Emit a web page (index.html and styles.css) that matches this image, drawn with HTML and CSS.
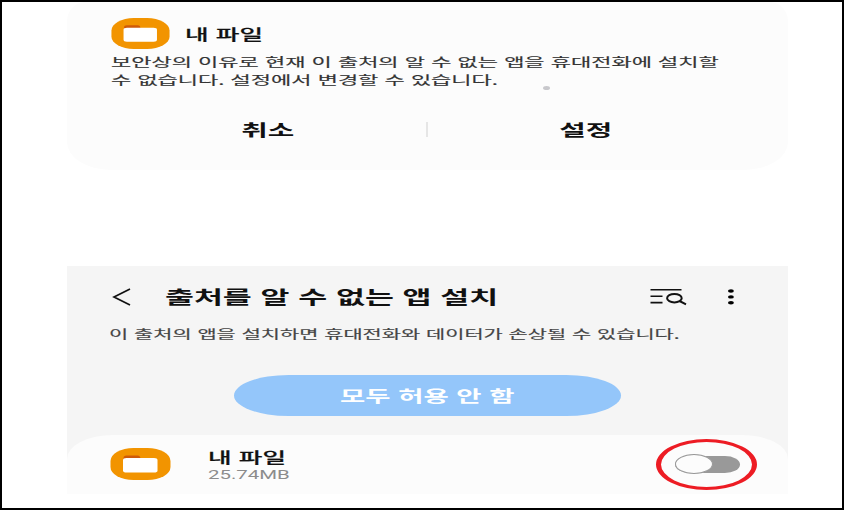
FILE: index.html
```html
<!DOCTYPE html>
<html lang="ko">
<head>
    <meta charset="UTF-8">
    <meta name="viewport" content="width=device-width, initial-scale=1.0">
    <title>출처를 알 수 없는 앱 설치</title>
    <link rel="stylesheet" href="styles.css">
</head>
<body>
    <div class="dialog">
        <div class="dialog-head">
            <svg class="app-icon" width="59" height="31" viewBox="0 0 60 32">
                <rect width="60" height="32" rx="23" ry="13" fill="#f29400"/>
                <path d="M13 13V10Q13 7.5 16 7.5H27Q30 7.5 30 11V14H13Z" fill="#cf5a08"/>
                <rect x="12.5" y="10" width="34.5" height="14.5" rx="3.5" ry="2" fill="#fff"/>
            </svg>
            <h2 class="app-name">내 파일</h2>
        </div>
        <p class="message">보안상의 이유로 현재 이 출처의 알 수 없는 앱을 휴대전화에 설치할<br>수 없습니다. 설정에서 변경할 수 있습니다.</p>
        <span class="touch-dot"></span>
        <div class="actions">
            <button><span>취소</span></button>
            <i class="divider"></i>
            <button><span>설정</span></button>
        </div>
    </div>

    <div class="settings">
        <header>
            <svg class="back" width="19" height="18" viewBox="0 0 19 18">
                <path d="M18 1L2 9L18 17" fill="none" stroke="#111" stroke-width="1.7"/>
            </svg>
            <h1>출처를 알 수 없는 앱 설치</h1>
            <svg class="search" width="37" height="18" viewBox="0 0 37 18">
                <g fill="none" stroke="#111" stroke-width="1.6">
                    <path d="M.5 1.8H31.5M.5 8.2H12.5M.5 14.6H12.5"/>
                    <ellipse cx="24.4" cy="10.2" rx="7.3" ry="4.2" stroke-width="2"/>
                    <path d="M29.5 13L36 16.4" stroke-width="2"/>
                </g>
            </svg>
            <svg class="more" width="6" height="18" viewBox="0 0 6 18">
                <ellipse cx="3" cy="3" rx="2.9" ry="1.7"/>
                <ellipse cx="3" cy="8.9" rx="2.9" ry="1.7"/>
                <ellipse cx="3" cy="14.7" rx="2.9" ry="1.7"/>
            </svg>
        </header>
        <p class="notice">이 출처의 앱을 설치하면 휴대전화와 데이터가 손상될 수 있습니다.</p>
        <button class="deny-all"><span>모두 허용 안 함</span></button>
        <div class="app-row">
            <svg class="app-icon" width="61" height="32" viewBox="0 0 60 32">
                <rect width="60" height="32" rx="23" ry="13" fill="#f29400"/>
                <path d="M13 13V10Q13 7.5 16 7.5H27Q30 7.5 30 11V14H13Z" fill="#cf5a08"/>
                <rect x="12.5" y="10" width="34.5" height="14.5" rx="3.5" ry="2" fill="#fff"/>
            </svg>
            <div class="app-info">
                <h2 class="app-name">내 파일</h2>
                <p class="size">25.74MB</p>
            </div>
            <div class="switch-mark">
                <div class="switch"><span class="knob"></span></div>
            </div>
        </div>
    </div>
</body>
</html>
```
FILE: styles.css
```css
* {
    box-sizing: border-box;
    margin: 0;
    padding: 0;
}
body {
    width: 844px;
    height: 510px;
    border: 2px solid #000;
    padding: 0 54px 0 65px;
    background-color: #fff;
    color: #111;
    font-family: "Noto Sans CJK KR", sans-serif;
    overflow: hidden;
}
button {
    border: 0;
    background: none;
    color: inherit;
    font-family: inherit;
}
svg {
    display: block;
    flex: none;
}

/* wide lettering */
h1, h2, p, button span {
    display: block;
    width: max-content;
    white-space: nowrap;
    transform-origin: 0 50%;
}
.app-name {
    font-size: 15px;
    line-height: 20px;
    font-weight: 500;
    -webkit-text-stroke: 0.2px #111;
    transform: scaleX(1.71);
}

.dialog {
    position: relative;
    width: 721px;
    height: 168px;
    padding: 16px 0 0 44px;
    background-color: #fcfcfc;
    border-radius: 18px 18px 44px 44px / 20px 20px 28px 28px;
}
.dialog-head {
    display: flex;
    align-items: center;
    gap: 15px;
    height: 31px;
}
.message {
    margin-top: 4px;
    font-size: 12.3px;
    line-height: 18px;
    color: #333;
    -webkit-text-stroke: 0.15px #333;
    transform: scaleX(1.788);
}
.touch-dot {
    position: absolute;
    left: 476px;
    top: 84px;
    width: 7px;
    height: 4px;
    border-radius: 50%;
    background-color: #c8c8cc;
}
.actions {
    display: flex;
    align-items: center;
    margin: 28px 0 0 -44px;
}
.actions button {
    display: flex;
    justify-content: center;
    width: 315px;
    font-size: 16px;
    line-height: 24px;
    font-weight: bold;
}
.actions button:first-child {
    width: 359px;
    padding-left: 43px;
}
.actions span {
    transform: scaleX(1.8);
    transform-origin: center;
}
.divider {
    width: 2px;
    height: 15px;
    background-color: #e6e6e6;
}

.settings {
    width: 721px;
    height: 228px;
    margin-top: 96px;
    background-color: #f5f5f5;
}
header {
    display: flex;
    align-items: center;
    height: 62px;
    padding: 0 54px 0 45px;
}
h1 {
    margin: -2px 0 0 34px;
    font-size: 18px;
    line-height: 26px;
    font-weight: bold;
    transform: scaleX(1.746);
}
.search {
    margin-left: auto;
}
.more {
    margin-left: 41px;
}
.notice {
    margin: -3px 0 0 42px;
    font-size: 12px;
    line-height: 18px;
    color: #444;
    -webkit-text-stroke: 0.15px #444;
    transform: scaleX(1.738);
}
.deny-all {
    display: flex;
    align-items: center;
    justify-content: center;
    width: 387px;
    height: 41px;
    margin: 32px 0 0 167px;
    padding-bottom: 2px;
    border-radius: 56px / 21px;
    background-color: #94c6fa;
    color: #fff;
    font-size: 15.5px;
    font-weight: bold;
}
.deny-all span {
    transform: scaleX(1.77);
    transform-origin: center;
}
.app-row {
    display: flex;
    align-items: center;
    height: 59px;
    margin-top: 19px;
    padding: 0 31px 1px 43px;
    border-radius: 46px 46px 0 0 / 24px 24px 0 0;
    background-color: #fcfcfc;
}
.app-info {
    margin-left: 37px;
}
.size {
    margin-top: 1px;
    font-family: Roboto, sans-serif;
    font-size: 12px;
    line-height: 14px;
    color: #8c8c8c;
    transform: scaleX(1.7);
}
.switch-mark {
    display: flex;
    align-items: center;
    justify-content: center;
    width: 101px;
    height: 51px;
    margin-left: auto;
    border: solid #ed1c24;
    border-width: 3px 5px;
    border-radius: 50%;
}
.switch {
    display: flex;
    align-items: center;
    width: 65px;
    height: 17px;
    margin-left: 1px;
    border-radius: 16px / 9px;
    background-color: #999;
}
.knob {
    flex: none;
    width: 38px;
    height: 20px;
    border: 1px solid #999;
    border-radius: 50%;
    background-color: #fcfcfc;
}
```
